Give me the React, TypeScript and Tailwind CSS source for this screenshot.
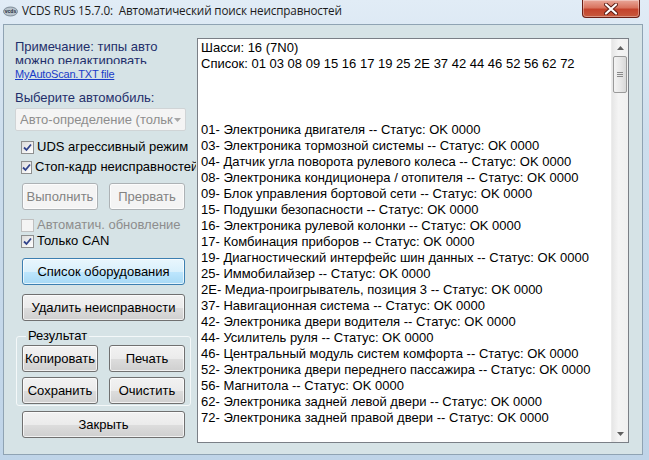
import React from 'react';

const font = { fontFamily: '"Liberation Sans", Arial, sans-serif' };

const lines = [
  '01- Электроника двигателя -- Статус: OK 0000',
  '03- Электроника тормозной системы -- Статус: OK 0000',
  '04- Датчик угла поворота рулевого колеса -- Статус: OK 0000',
  '08- Электроника кондиционера / отопителя -- Статус: OK 0000',
  '09- Блок управления бортовой сети -- Статус: OK 0000',
  '15- Подушки безопасности -- Статус: OK 0000',
  '16- Электроника рулевой колонки -- Статус: OK 0000',
  '17- Комбинация приборов -- Статус: OK 0000',
  '19- Диагностический интерфейс шин данных -- Статус: OK 0000',
  '25- Иммобилайзер -- Статус: OK 0000',
  '2E- Медиа-проигрыватель, позиция 3 -- Статус: OK 0000',
  '37- Навигационная система -- Статус: OK 0000',
  '42- Электроника двери водителя -- Статус: OK 0000',
  '44- Усилитель руля -- Статус: OK 0000',
  '46- Центральный модуль систем комфорта -- Статус: OK 0000',
  '52- Электроника двери переднего пассажира -- Статус: OK 0000',
  '56- Магнитола -- Статус: OK 0000',
  '62- Электроника задней левой двери -- Статус: OK 0000',
  '72- Электроника задней правой двери -- Статус: OK 0000',
];

const Btn: React.FC<{ label: string; w: string; disabled?: boolean; primary?: boolean }> = ({ label, w, disabled, primary }) => {
  let cls = 'border-[#707070] bg-[linear-gradient(#f2f2f2_0%,#ebebeb_50%,#dddddd_51%,#cfcfcf_100%)] text-black';
  if (disabled) cls = 'border-[#adb2b5] bg-[#f4f4f4] text-[#838383]';
  if (primary) cls = 'border-[#3c7fb1] bg-[linear-gradient(#e9f6fd_0%,#d9f0fc_50%,#bee6fd_51%,#a7d9f5_100%)] text-black';
  return (
    <div className={`${w} h-[27px] shrink-0 flex items-center justify-center rounded-[3px] border text-[13px] shadow-[inset_0_0_0_1px_rgba(255,255,255,0.7)] ${cls}`}>
      {label}
    </div>
  );
};

const Check: React.FC<{ label: string; checked?: boolean; disabled?: boolean }> = ({ label, checked, disabled }) => (
  <div className="flex items-center h-[16px] pl-[6px] whitespace-nowrap">
    <div className={`w-[13px] h-[13px] border flex items-center justify-center ${disabled ? 'border-[#c0c0c0] bg-[#f4f4f4]' : 'border-[#8e8f8f] bg-[linear-gradient(135deg,#dcdcdc,#ffffff)]'}`}>
      {checked && (
        <svg width="9" height="9" viewBox="0 0 9 9">
          <path d="M1 4.5 L3.5 7 L8 1.5" fill="none" stroke="#31438b" strokeWidth="1.8" />
        </svg>
      )}
    </div>
    <span className={`ml-[3px] text-[13px] ${disabled ? 'text-[#8d8d8d]' : 'text-black'}`}>{label}</span>
  </div>
);

export default function App() {
  return (
    <div className="w-[649px] h-[460px] overflow-hidden flex flex-col bg-[linear-gradient(180deg,#e1ecf6_0%,#cddeed_30%,#bfd4e8_100%)]" style={font}>
      {/* Title bar */}
      <div className="h-[24px] flex items-start shrink-0 relative">
        <div className="flex items-center h-[22px] pl-[3px]">
          <svg width="15" height="11" viewBox="0 0 15 11">
            <ellipse cx="7.5" cy="5.5" rx="7" ry="4.5" fill="#b8c3cc" stroke="#6b7a86" strokeWidth="0.8" />
            <text x="7.5" y="7.2" fontSize="5" textAnchor="middle" fill="#1d2a3a" fontFamily="Liberation Sans" fontWeight="bold">vcds</text>
          </svg>
          <span className="ml-[4px] text-[11.7px] text-[#1b1b1b] tracking-[-0.15px]" style={{ fontFamily: '"Open Sans", "Noto Sans", sans-serif' }}>
            VCDS RUS 15.7.0:&nbsp; Автоматический поиск неисправностей
          </span>
        </div>
        <div className="absolute right-[9px] top-0 w-[58px] h-[18px] rounded-b-[4px] border border-t-0 border-[#6b1f15] bg-[linear-gradient(180deg,#e9a799_0%,#d9745f_45%,#c4432c_55%,#c75a3d_100%)] flex items-center justify-center shadow-[inset_0_0_0_1px_rgba(255,255,255,0.35)]">
          <svg width="14" height="12" viewBox="0 0 14 12">
            <path d="M2 1.5 L12 10.5 M12 1.5 L2 10.5" stroke="#5a1a12" strokeWidth="4" strokeLinecap="round" />
            <path d="M2 1.5 L12 10.5 M12 1.5 L2 10.5" stroke="#ffffff" strokeWidth="2.2" strokeLinecap="round" />
          </svg>
        </div>
      </div>

      {/* Client area */}
      <div className="ml-[3px] mr-[6px] mb-[5px] flex-1 border border-[#8fa3b3] bg-[#d6e3e6] flex">
        {/* Left column */}
        <div className="w-[181px] ml-[11px] shrink-0 overflow-hidden flex flex-col pt-[15px]">
          <div className="h-[24px] overflow-hidden text-[13px] leading-[14px] text-[#1f2f6b]">
            Примечание: типы авто<br />можно редактировать
          </div>
          <div className="mt-[3px] h-[14px] text-[11px] leading-[14px] text-[#1a3cc8] underline tracking-[-0.2px]">MyAutoScan.TXT file</div>
          <div className="mt-[9px] h-[15px] text-[13px] leading-[15px] text-[#1f2f6b]">Выберите автомобиль:</div>
          <div className="mt-[3px] w-[171px] h-[23px] border border-[#d0d4d6] rounded-[2px] bg-[#f4f4f4] flex items-center pl-[4px] pr-[5px] overflow-hidden">
            <span className="w-[154px] shrink-0 text-[13px] text-[#8d8d8d] whitespace-nowrap overflow-hidden">Авто-определение (тольк</span>
            <div className="flex-1" />
            <svg width="7" height="4" viewBox="0 0 7 4" className="shrink-0">
              <path d="M0 0 L7 0 L3.5 4 Z" fill="#a7a7a7" />
            </svg>
          </div>
          <div className="mt-[8px]"><Check label="UDS агрессивный режим" checked /></div>
          <div className="mt-[4px]"><Check label="Стоп-кадр неисправностей" checked /></div>
          <div className="mt-[8px] flex gap-[11px] pl-[7px]">
            <Btn label="Выполнить" w="w-[76px]" disabled />
            <Btn label="Прервать" w="w-[76px]" disabled />
          </div>
          <div className="mt-[7px]"><Check label="Автоматич. обновление" disabled /></div>
          <div><Check label="Только CAN" checked /></div>
          <div className="mt-[9px] pl-[7px]"><Btn label="Список оборудования" w="w-[163px]" primary /></div>
          <div className="mt-[9px] pl-[7px]"><Btn label="Удалить неисправности" w="w-[163px]" /></div>
          <fieldset className="mt-[8px] ml-[1px] w-[175px] border border-[#f4f8f9] rounded-[3px] px-[5px] pb-[1px] pt-[2px]">
            <legend className="ml-[4px] px-[2px] text-[13px] leading-[14px] text-black">Результат</legend>
            <div className="flex flex-col gap-[5px]">
              <div className="flex gap-[11px]">
                <Btn label="Копировать" w="w-[76px]" />
                <Btn label="Печать" w="w-[76px]" />
              </div>
              <div className="flex gap-[11px]">
                <Btn label="Сохранить" w="w-[76px]" />
                <Btn label="Очистить" w="w-[76px]" />
              </div>
            </div>
          </fieldset>
          <div className="mt-[5px] pl-[7px]"><Btn label="Закрыть" w="w-[163px]" /></div>
        </div>

        {/* Output text */}
        <div className="mt-[13px] ml-[1px] w-[432px] h-[405px] border border-[#7a7f86] bg-white flex">
          <div className="flex-1 pl-[3px] pt-[1px] text-[13px] leading-[16px] text-black whitespace-nowrap overflow-hidden">
            <div>Шасси: 16 (7N0)</div>
            <div>Список: 01 03 08 09 15 16 17 19 25 2E 37 42 44 46 52 56 62 72</div>
            <div className="h-[50px]" />
            {lines.map((l) => (
              <div key={l}>{l}</div>
            ))}
          </div>
          <div className="w-[17px] shrink-0 bg-[linear-gradient(90deg,#e6e6e6,#f4f4f4_40%,#f0f0f0)] border-l border-[#ececec] flex flex-col">
            <div className="h-[17px] flex items-center justify-center">
              <svg width="7" height="4" viewBox="0 0 7 4"><path d="M0 4 L7 4 L3.5 0 Z" fill="#606060" /></svg>
            </div>
            <div className="mx-[1px] h-[37px] rounded-[2px] border border-[#9a9a9a] bg-[linear-gradient(90deg,#f3f3f3,#e8e8e8_50%,#d8d8d8)] flex flex-col items-center justify-center gap-[1px]">
              <div className="w-[6px] h-[1px] bg-[#8a8a8a]" />
              <div className="w-[6px] h-[1px] bg-[#8a8a8a]" />
              <div className="w-[6px] h-[1px] bg-[#8a8a8a]" />
            </div>
            <div className="flex-1" />
            <div className="h-[17px] flex items-center justify-center">
              <svg width="7" height="4" viewBox="0 0 7 4"><path d="M0 0 L7 0 L3.5 4 Z" fill="#606060" /></svg>
            </div>
          </div>
        </div>
      </div>
    </div>
  );
}
